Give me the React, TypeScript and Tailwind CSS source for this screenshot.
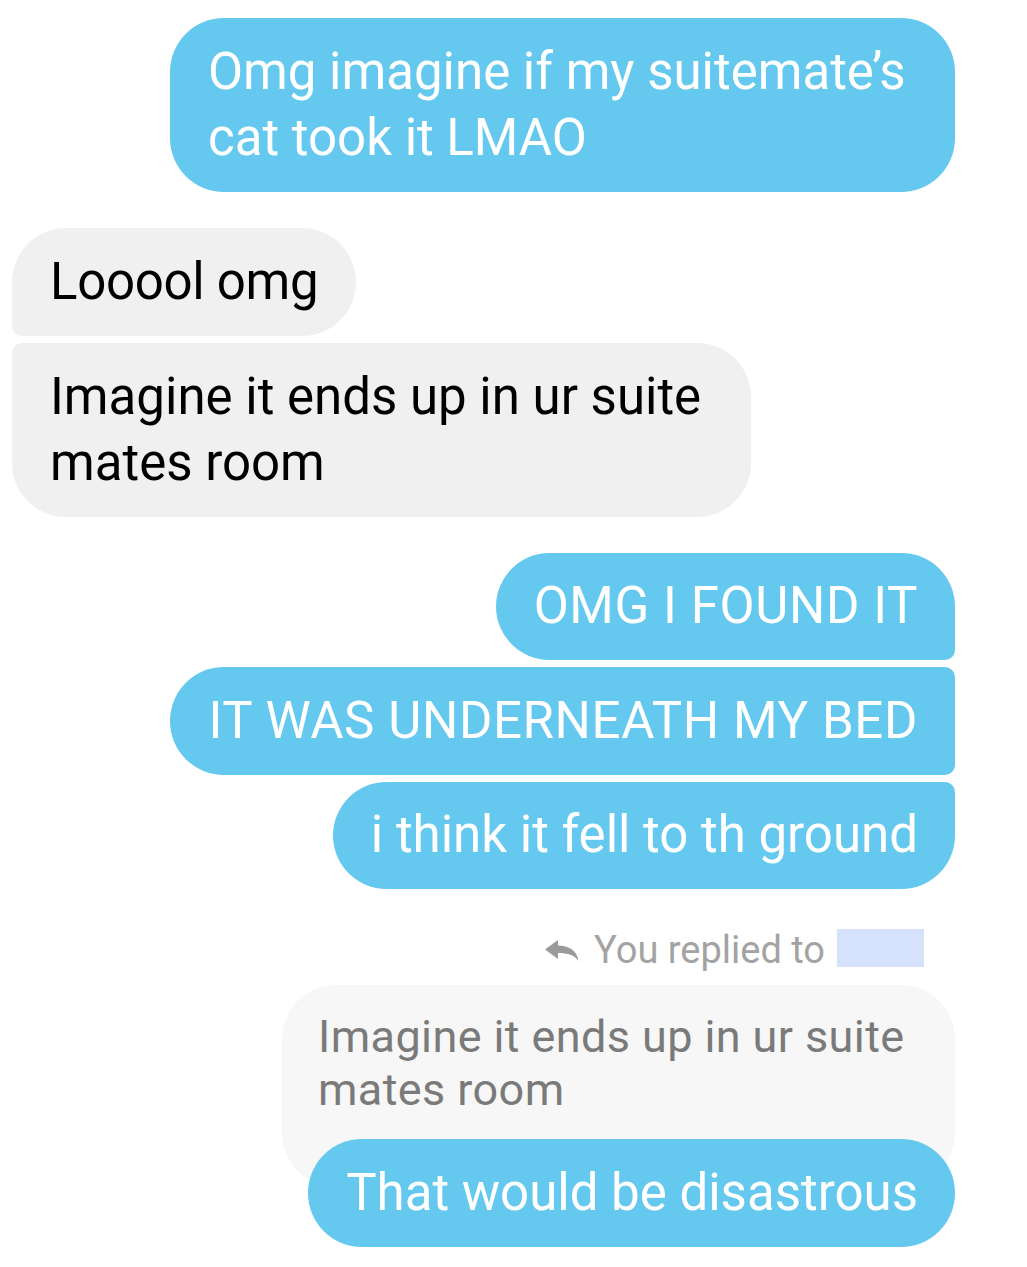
import React from "react";

const font = { fontFamily: "Roboto, 'Noto Sans', sans-serif" };

function ReplyIcon() {
  return (
    <svg viewBox="0 0 34 21" className="w-[34px] h-[21px] fill-[#9a9a9a]">
      <path d="M0 9.5 L13 0 V5.5 C24 5.5 32 10.5 33.5 21 C29.5 15 23 13 13 13 V19 Z" />
    </svg>
  );
}

export default function App() {
  return (
    <div className="w-[1027px] min-h-[1267px] bg-white pl-[12px] pr-[72px] pt-[18px]" style={font}>
      {/* first outgoing */}
      <div className="flex justify-end">
        <div className="w-[785px] bg-[#65c9ef] text-white text-[51px] leading-[66px] px-[38px] pt-[21px] pb-[21px] rounded-[54px]">
          Omg imagine if my suitemate’s cat took it LMAO
        </div>
      </div>

      {/* incoming */}
      <div className="mt-[36px] flex flex-col items-start gap-[7px]">
        <div className="bg-[#f0f0f0] text-black text-[51px] leading-[66px] tracking-[-0.3px] px-[38px] pt-[20.5px] pb-[21px] rounded-[54px] rounded-bl-[10px] whitespace-nowrap">
          Looool omg
        </div>
        <div className="w-[739px] bg-[#f0f0f0] text-black text-[51px] leading-[66px] px-[38px] pt-[21px] pb-[21px] rounded-[54px] rounded-tl-[10px]">
          Imagine it ends up in ur suite mates room
        </div>
      </div>

      {/* outgoing group */}
      <div className="mt-[36px] flex flex-col items-end gap-[7px]">
        <div className="bg-[#65c9ef] text-white text-[51px] leading-[66px] tracking-[0.6px] pl-[38px] pr-[37px] pt-[20.5px] pb-[21px] rounded-[54px] rounded-br-[10px] whitespace-nowrap">
          OMG I FOUND IT
        </div>
        <div className="bg-[#65c9ef] text-white text-[51px] leading-[66px] tracking-[0.6px] pl-[38px] pr-[37px] pt-[20.5px] pb-[21px] rounded-[54px] rounded-tr-[10px] rounded-br-[10px] whitespace-nowrap">
          IT WAS UNDERNEATH MY BED
        </div>
        <div className="bg-[#65c9ef] text-white text-[51px] leading-[66px] pl-[38px] pr-[37px] pt-[20.5px] pb-[21px] rounded-[54px] rounded-tr-[10px] whitespace-nowrap">
          i think it fell to th ground
        </div>
      </div>

      {/* reply */}
      <div className="mt-[41px] flex items-center justify-end pr-[31px] h-[40px]">
        <ReplyIcon />
        <span className="ml-[15px] text-[38px] leading-[40px] text-[#a3a3a3]">You replied to</span>
        <span className="ml-[12px] w-[87px] h-[38px] -mt-[4px] bg-[#d6e2fb]" />
      </div>
      <div className="mt-[15px] flex flex-col items-end">
        <div className="w-[673px] bg-[#f7f7f7] text-[#7a7a7a] text-[45px] leading-[53px] tracking-[0.4px] pl-[36px] pr-[24px] pt-[25px] pb-[71px] rounded-[54px]">
          Imagine it ends up in ur suite mates room
        </div>
        <div className="-mt-[48px] bg-[#65c9ef] text-white text-[51px] leading-[66px] pl-[38px] pr-[37px] pt-[20.5px] pb-[21px] rounded-[54px] whitespace-nowrap">
          That would be disastrous
        </div>
      </div>
    </div>
  );
}
